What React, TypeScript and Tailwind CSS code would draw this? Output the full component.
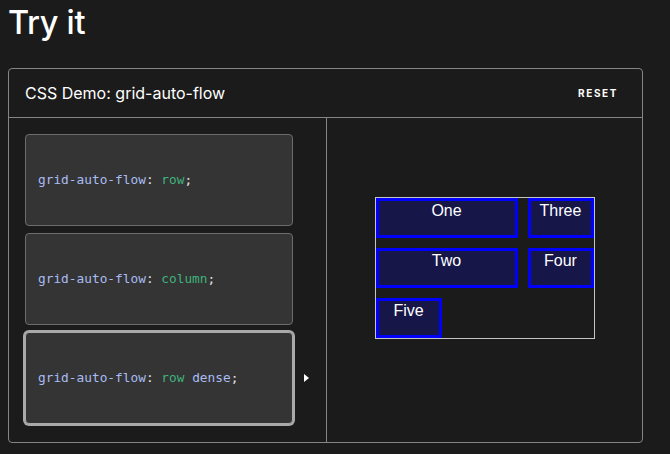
import React, { useState } from 'react'

const choices = [
  { value: 'row', extra: '' },
  { value: 'column', extra: '' },
  { value: 'row', extra: ' dense' },
]

const items = [
  { label: 'One', span: true },
  { label: 'Two', span: true },
  { label: 'Three', span: false },
  { label: 'Four', span: false },
  { label: 'Five', span: false },
]

export default function App() {
  const [selected, setSelected] = useState(2)
  const flow = selected === 0 ? 'row' : selected === 1 ? 'column' : 'row dense'

  return (
    <div className="min-h-screen w-full bg-[#1b1b1b] pl-[8px] pr-[27px] pt-[2px] font-['Inter',sans-serif] text-white">
      <h2 className="text-[32.5px] leading-[41px] font-medium tracking-[-0.3px]">Try it</h2>

      <section className="mt-[25px] rounded-[4px] border border-[#858585]">
        <header className="flex h-[49px] items-center justify-between border-b border-[#858585] pl-[16px] pr-[24px]">
          <span className="text-[16px]">CSS Demo: grid-auto-flow</span>
          <button
            onClick={() => setSelected(2)}
            className="text-[10px] font-bold tracking-[1.6px] text-white"
          >
            RESET
          </button>
        </header>

        <div className="flex">
          <div className="flex w-[318px] flex-col gap-[7px] border-r border-[#858585] pt-[16px] pb-[18px] pl-[16px]">
            {choices.map((c, i) => (
              <div key={i} className="flex items-center">
                <button
                  onClick={() => setSelected(i)}
                  className={
                    'flex h-[92px] w-[268px] items-center rounded-[4px] border bg-[#343434] pl-[12px] text-left font-["DejaVu_Sans_Mono",monospace] text-[12.8px] ' +
                    (selected === i
                      ? 'border-[#a9a9a9] ring-2 ring-[#a9a9a9]'
                      : 'border-[#6c6c6c]')
                  }
                >
                  <span className="text-[#a9bcf3]">grid-auto-flow</span>
                  <span className="text-[#e6e6e6]">:&nbsp;</span>
                  <span className="text-[#3fb27c]">{c.value}</span>
                  {c.extra && <span className="text-[#a9bcf3]">&nbsp;dense</span>}
                  <span className="text-[#e6e6e6]">;</span>
                </button>
                {selected === i && (
                  <svg width="5" height="8" viewBox="0 0 5 8" className="ml-[11px]">
                    <path d="M0 0 L5 4 L0 8 Z" fill="#ffffff" />
                  </svg>
                )}
              </div>
            ))}
          </div>

          <div className="flex flex-1 justify-center pt-[79px]">
            <div
              className="grid h-[142px] w-[220px] grid-cols-3 grid-rows-[repeat(3,40px)] gap-[10px] border border-[#c5c5c5] font-['Liberation_Sans',Arial,sans-serif] text-[16px] leading-[20px]"
              style={{ gridAutoFlow: flow as React.CSSProperties['gridAutoFlow'] }}
            >
              {items.map((it) => (
                <div
                  key={it.label}
                  className={
                    'border-[3px] border-[#0000ff] bg-[#161649] text-center ' +
                    (it.span ? 'col-span-2' : '')
                  }
                >
                  {it.label}
                </div>
              ))}
            </div>
          </div>
        </div>
      </section>
    </div>
  )
}
